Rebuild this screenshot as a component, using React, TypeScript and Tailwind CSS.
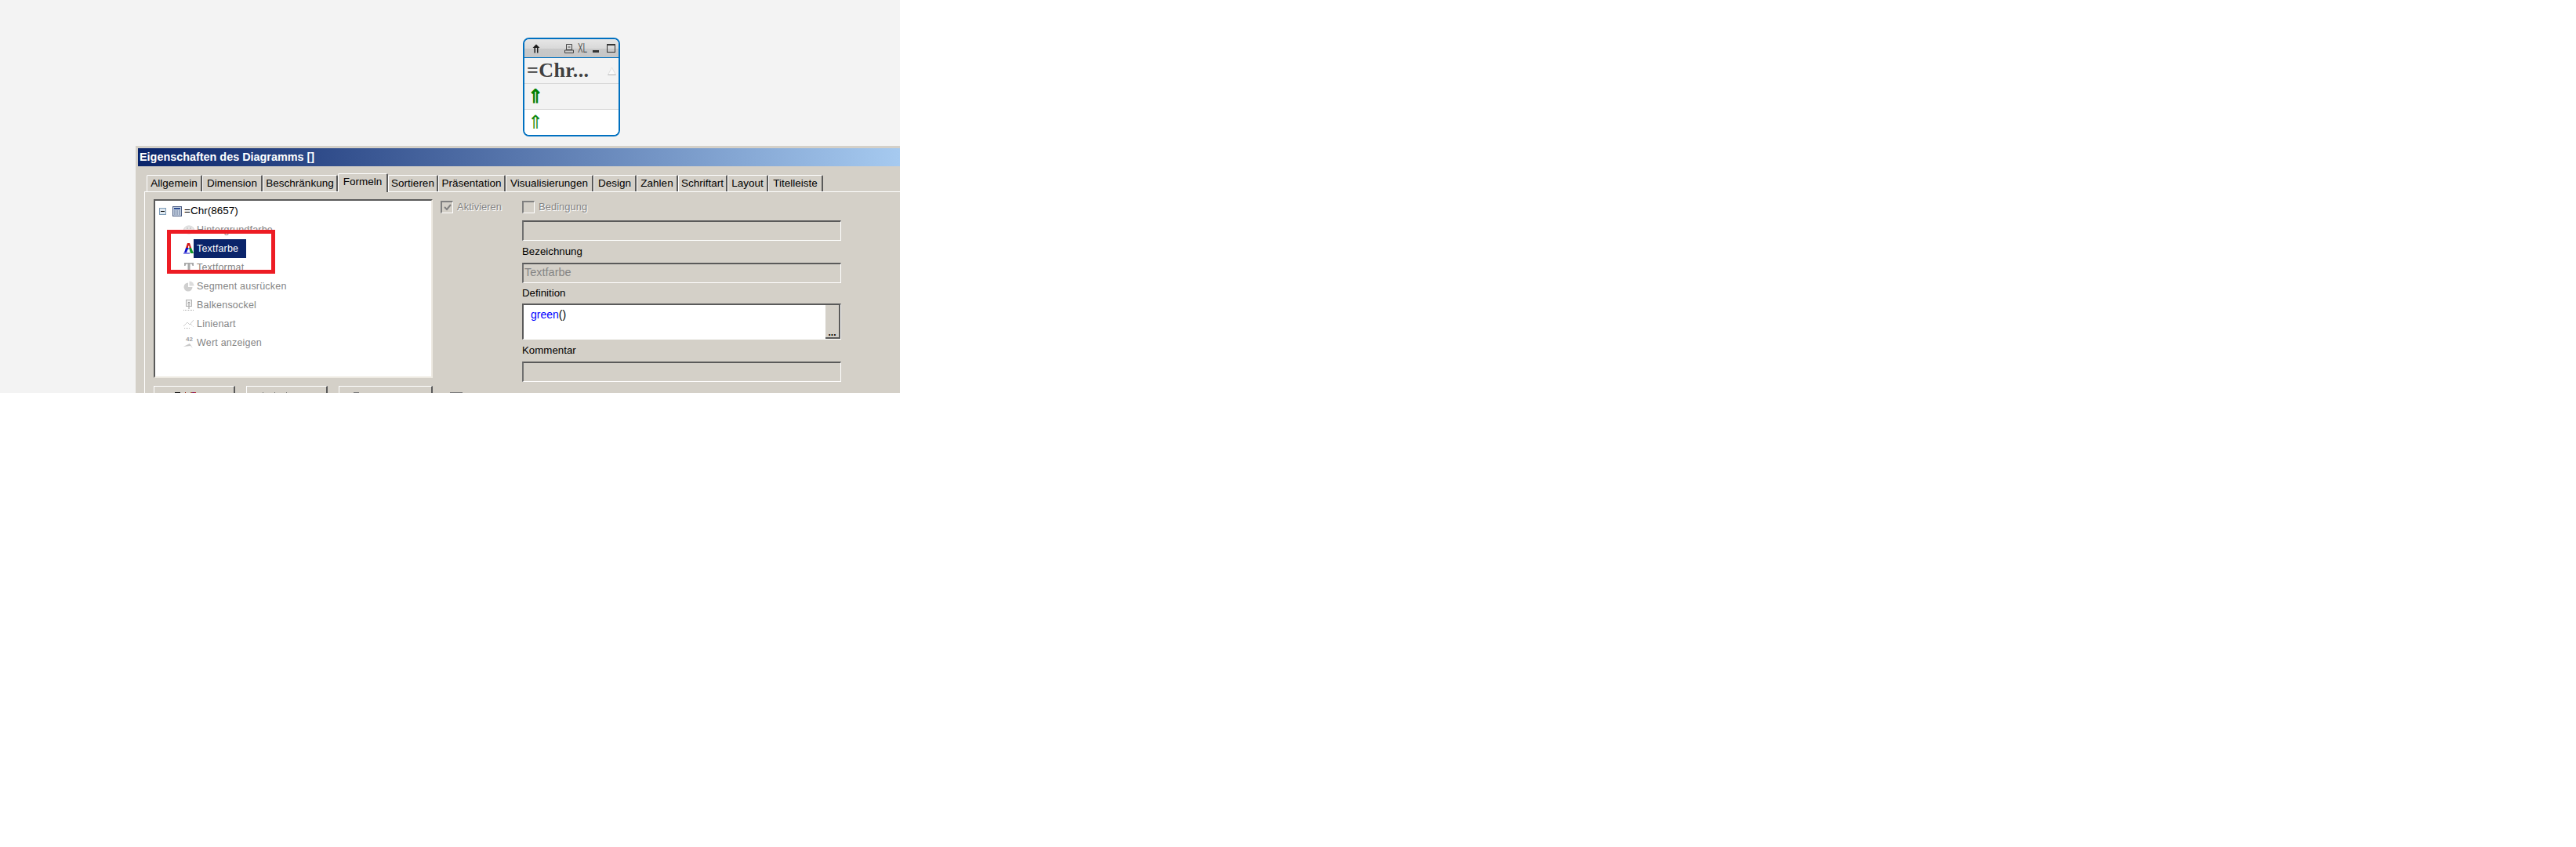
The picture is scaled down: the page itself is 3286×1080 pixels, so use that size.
const tabs = [
  { label: "Allgemein", cls: "w-[71px]" },
  { label: "Dimension", cls: "w-[77px]" },
  { label: "Beschränkung", cls: "w-[96px]" },
  { label: "Formeln", cls: "w-[64px]", active: true },
  { label: "Sortieren", cls: "w-[64px]" },
  { label: "Präsentation", cls: "w-[86px]" },
  { label: "Visualisierungen", cls: "w-[112px]" },
  { label: "Design", cls: "w-[55px]" },
  { label: "Zahlen", cls: "w-[53px]" },
  { label: "Schriftart", cls: "w-[63px]" },
  { label: "Layout", cls: "w-[52px]" },
  { label: "Titelleiste", cls: "w-[70px]" },
];

function PaletteIcon() {
  return (
    <svg width="14" height="14" viewBox="0 0 14 14" className="shrink-0">
      <ellipse cx="7" cy="7" rx="6.5" ry="5" fill="#e8e8e8" stroke="#d4d4d4" />
      <circle cx="5" cy="5" r="1" fill="#c4c4c4" />
      <circle cx="9" cy="5" r="1" fill="#c4c4c4" />
    </svg>
  );
}

function ColorAIcon() {
  return (
    <svg width="14" height="14" viewBox="0 0 14 14" className="shrink-0">
      <path d="M5 0h3l2 6H3z" fill="#d01818" />
      <path d="M3 6h3.500v2H5.500L4 12H1z" fill="#1010c8" />
      <path d="M7 6h3l3 7H9z" fill="#109828" />
      <path d="M0 13h8" stroke="#1010c8" />
      <path d="M6 3.500h1.500v2.500H6z" fill="#fff" />
    </svg>
  );
}

function FormatIcon() {
  return (
    <svg width="14" height="14" viewBox="0 0 14 14" className="shrink-0">
      <path d="M1 1h12v4h-1.500L10.500 2.500H8.500V12l1.500 1H4l1.500-1V2.500h-2L2.500 5H1z" fill="#a8a8a8" />
    </svg>
  );
}

function PieIcon() {
  return (
    <svg width="14" height="14" viewBox="0 0 14 14" className="shrink-0">
      <path d="M6 2.500a5.500 5.500 0 1 0 5.500 5.500H6z" fill="#cfcfcf" />
      <path d="M7.500 0.500a6 6 0 0 1 6 6h-6z" fill="#dcdcdc" />
    </svg>
  );
}

function BarBaseIcon() {
  return (
    <svg width="14" height="15" viewBox="0 0 14 15" className="shrink-0">
      <rect x="3.500" y="0.500" width="7" height="8" fill="#f2f2f2" stroke="#b0b0b0" />
      <path d="M7 8V3M5.500 4.500 7 3l1.500 1.500M7 9v3" stroke="#9a9a9a" fill="none" />
      <path d="M0 13.500h14" stroke="#a8a8a8" strokeDasharray="1 1" />
    </svg>
  );
}

function LineStyleIcon() {
  return (
    <svg width="14" height="14" viewBox="0 0 14 14" className="shrink-0">
      <path d="M0 10 5 5l3 3 5-6" stroke="#cfcfcf" fill="none" />
      <path d="M1 12.500h8M9 7l4 4" stroke="#bdbdbd" strokeDasharray="1 1" fill="none" />
    </svg>
  );
}

function ValueIcon() {
  return (
    <div className="relative h-[16px] w-[14px] shrink-0">
      <span className="absolute left-[3px] top-[-2px] font-['Liberation_Sans',sans-serif] text-[8px] font-bold text-[#a0a0a0]">42</span>
      <svg width="14" height="8" viewBox="0 0 14 8" className="absolute bottom-0 left-0">
        <path d="M0 5 8 1l4 6-3-3z" fill="#c8c8c8" />
      </svg>
    </div>
  );
}

const treeItems = [
  { label: "Hintergrundfarbe", icon: <PaletteIcon /> },
  { label: "Textfarbe", icon: <ColorAIcon />, selected: true },
  { label: "Textformat", icon: <FormatIcon /> },
  { label: "Segment ausrücken", icon: <PieIcon /> },
  { label: "Balkensockel", icon: <BarBaseIcon /> },
  { label: "Linienart", icon: <LineStyleIcon /> },
  { label: "Wert anzeigen", icon: <ValueIcon /> },
];

function Widget() {
  return (
    <div className="flex h-[126px] w-[124px] flex-col overflow-hidden rounded-[8px] border-2 border-[#0070c0] bg-white">
      <div className="flex h-[24px] shrink-0 items-center border-b-[1px] border-[#0070c0] bg-[linear-gradient(#e6e6e6_0%,#d9d9d9_50%,#c9c9c9_52%,#c6c6c6_100%)] pl-[10px]">
        <svg width="10" height="12" viewBox="0 0 10 12" className="shrink-0">
          <path d="M5 0.500 9.500 5H7.500V11.500H6V5H4V11.500H2.500V5H0.500z" fill="#1a1a1a" />
        </svg>
        <svg width="12" height="12" viewBox="0 0 12 12" className="ml-[31px] shrink-0">
          <path d="M2.500 0.500h7v7h-7zM0.500 8h11v3.500H0.500zM4.500 4h3" stroke="#444" fill="none" />
        </svg>
        <span className="ml-[5px] w-[12px] shrink-0 origin-left font-['Liberation_Sans',sans-serif] text-[16px] leading-none text-[#555] [transform:scaleX(0.62)]">XL</span>
        <span className="ml-[7px] mt-[7px] h-[3px] w-[8px] shrink-0 bg-[#333]" />
        <span className="ml-[10px] h-[11px] w-[11px] shrink-0 border-[1px] border-t-[2px] border-[#333]" />
      </div>
      <div className="flex h-[32px] shrink-0 items-center justify-between bg-[#f3f3f3] pl-[3px] pr-[3px]">
        <span className="font-['Liberation_Serif',serif] text-[26px] font-bold leading-none tracking-[0.400px] text-[#404040]">=Chr...</span>
        <svg width="11" height="11" viewBox="0 0 11 11" className="shrink-0">
          <path d="M5.500 1 10.500 10.500H0.500z" fill="#fafafa" stroke="#e0e0e0" />
          <path d="M0.500 10.500H10.500" stroke="#b4b4b4" />
        </svg>
      </div>
      <div className="flex h-[33px] shrink-0 items-center border-t-[1px] border-[#d8d8d8] bg-[#f3f3f3] pl-[4px]">
        <span className="font-['Liberation_Serif',serif] text-[24px] font-bold leading-none text-[#008000]">⇑</span>
      </div>
      <div className="flex flex-1 items-center border-t-[1px] border-[#d8d8d8] bg-white pl-[4px]">
        <span className="font-['Liberation_Serif',serif] text-[24px] leading-none text-[#108a10]">⇑</span>
      </div>
    </div>
  );
}

function Field({ label, value }: { label?: string; value?: string }) {
  return (
    <div>
      {label && <div className="h-[28px] pt-[6px] text-[13.300px] leading-[16px] text-black">{label}</div>}
      <div className="h-[26px] border-b-[1px] border-l-2 border-r-[1px] border-t-2 border-b-white border-l-[#707070] border-r-white border-t-[#5a5a5a] pl-[1px] text-[14.500px] leading-[20px] text-[#858585]">
        {value}
      </div>
    </div>
  );
}

export default function App() {
  return (
    <div className="h-[501px] w-[1148px] overflow-hidden bg-[#f3f3f3] font-['Liberation_Sans',sans-serif] text-[13.500px]">
      <div className="h-[186px] pl-[667px] pt-[48px]">
        <Widget />
      </div>

      <div className="relative ml-[173px] h-[315px] border-t-[3px] border-[#d4d0c8] bg-[#d4d0c8] pl-[3px]">
        <div className="flex h-[23px] items-center bg-[linear-gradient(to_right,#0a246a,#a6caf0)] pl-[2px] text-[14.400px] font-bold text-white">
          Eigenschaften des Diagramms []
        </div>

        <div className="flex h-[32px] items-end pl-[11px]">
          {tabs.map((tab) => (
            <div
              key={tab.label}
              className={
                tab.active
                  ? "relative z-10 -mb-[1px] flex h-[24px] w-[64px] items-center justify-center rounded-t-[2px] border-l-[1px] border-r-2 border-t-[1px] border-l-white border-r-[#5a5a5a] border-t-white bg-[#d4d0c8] pb-[3px] text-black"
                  : `flex h-[21px] items-center justify-center rounded-t-[2px] border-l-[1px] border-r-2 border-t-[1px] border-l-white border-r-[#5a5a5a] border-t-white text-black ${tab.cls}`
              }
            >
              {tab.label}
            </div>
          ))}
        </div>

        <div className="ml-[8px] flex h-[300px] border-l-[1px] border-t-[1px] border-white pl-[11px] pt-[9px]">
          <div className="w-[356px] shrink-0">
            <div className="h-[228px] border-b-2 border-l-2 border-r-2 border-t-2 border-b-[#eeeae2] border-l-[#5a5a5a] border-r-[#eeeae2] border-t-[#5a5a5a] bg-white pl-[5px] pt-[1px]">
              <div className="flex h-[24px] items-center">
                <span className="flex h-[9px] w-[9px] items-center justify-center border-[1px] border-[#7f9db9] bg-[#dfe8f0]">
                  <span className="h-[1px] w-[5px] bg-black" />
                </span>
                <svg width="12" height="13" viewBox="0 0 12 13" className="ml-[8px] shrink-0">
                  <rect x="0.500" y="0.500" width="11" height="12" fill="#c8d4e4" stroke="#4a5a80" />
                  <path d="M2 3h8" stroke="#2a4a90" strokeWidth="2" />
                  <path d="M2 6h8M2 8h8M2 10h8" stroke="#6a7a9a" strokeDasharray="2 1" />
                </svg>
                <span className="ml-[3px] text-black">=Chr(8657)</span>
              </div>
              {treeItems.map((item) => (
                <div key={item.label} className="flex h-[24px] items-center pl-[31px]">
                  <span className="flex w-[17px] justify-start">{item.icon}</span>
                  <span
                    className={
                      item.selected
                        ? "-ml-[4px] flex h-[24px] w-[67px] items-center bg-[#0a246a] pl-[4px] text-[12.500px] tracking-[0.200px] text-white"
                        : "text-[12.500px] tracking-[0.200px] text-[#858585]"
                    }
                  >
                    {item.label}
                  </span>
                </div>
              ))}
            </div>

            <div className="mt-[10px] flex gap-[14px]">
              <div className="h-[30px] w-[104px] border-l-[1px] border-r-2 border-t-[1px] border-l-white border-r-[#5a5a5a] border-t-white pl-[26px] pt-[7px]">
                <div className="flex h-[5px] gap-[6px] overflow-hidden">
                  <span className="h-[5px] w-[7px] bg-[#222]" />
                  <span className="h-[5px] w-[1px] bg-[#a03020]" />
                  <span className="h-[5px] w-[7px] bg-[linear-gradient(to_right,#c08020,#802080,#d04020)]" />
                </div>
              </div>
              <div className="h-[30px] w-[104px] border-l-[1px] border-r-2 border-t-[1px] border-l-white border-r-[#5a5a5a] border-t-white pl-[20px] pt-[7px]">
                <div className="flex gap-[14px]">
                  <span className="h-[4px] w-[1px] bg-[#808080]" />
                  <span className="h-[4px] w-[1px] bg-[#808080]" />
                  <span className="h-[4px] w-[1px] bg-[#808080]" />
                </div>
              </div>
              <div className="h-[30px] w-[120px] border-l-[1px] border-r-2 border-t-[1px] border-l-white border-r-[#5a5a5a] border-t-white pl-[18px] pt-[7px]">
                <div className="h-[4px] w-[7px] bg-[#808080]" />
              </div>
            </div>
          </div>

          <div className="ml-[10px] w-[104px] shrink-0 pt-[2px]">
            <div className="flex h-[16px] items-center">
              <span className="flex h-[16px] w-[16px] items-center justify-center border-b-[1px] border-l-2 border-r-[1px] border-t-2 border-b-white border-l-[#808080] border-r-white border-t-[#808080]">
                <svg width="10" height="9" viewBox="0 0 10 9">
                  <path d="M1 4 4 7 9 1" stroke="#808080" strokeWidth="2" fill="none" />
                </svg>
              </span>
              <span className="ml-[5px] text-[13px] text-[#858585] [text-shadow:1px_1px_0_#fff]">Aktivieren</span>
            </div>
            <div className="ml-[12px] mt-[228px] h-[10px] w-[16px] bg-[#808080]" />
          </div>

          <div className="w-[407px] shrink-0 pt-[2px]">
            <div className="flex h-[16px] items-center">
              <span className="h-[16px] w-[16px] border-b-[1px] border-l-2 border-r-[1px] border-t-2 border-b-white border-l-[#808080] border-r-white border-t-[#808080]" />
              <span className="ml-[5px] text-[13px] text-[#858585] [text-shadow:1px_1px_0_#fff]">Bedingung</span>
            </div>
            <div className="mt-[9px]">
              <Field />
            </div>
            <Field label="Bezeichnung" value="Textfarbe" />
            <div className="h-[26px] pt-[5px] text-[13.300px] leading-[16px] text-black">Definition</div>
            <div className="flex h-[46px] border-b-[1px] border-l-2 border-r-[1px] border-t-2 border-b-white border-l-[#5a5a5a] border-r-white border-t-[#5a5a5a]">
              <div className="flex-1 bg-white pl-[9px] pt-[3px] text-[14px] leading-[18px]">
                <span className="text-[#0000ff]">green</span>
                <span className="text-black">()</span>
              </div>
              <div className="flex w-[19px] items-end justify-center border-b-2 border-r-2 border-[#5a5a5a] bg-[#d4d0c8] pb-[3px] text-[12px] font-bold leading-[6px] text-black">
                ...
              </div>
            </div>
            <Field label="Kommentar" />
          </div>
        </div>

        <div className="absolute left-[40px] top-[104px] h-[56px] w-[138px] border-[5px] border-[#ed1c24]" />
      </div>
    </div>
  );
}
